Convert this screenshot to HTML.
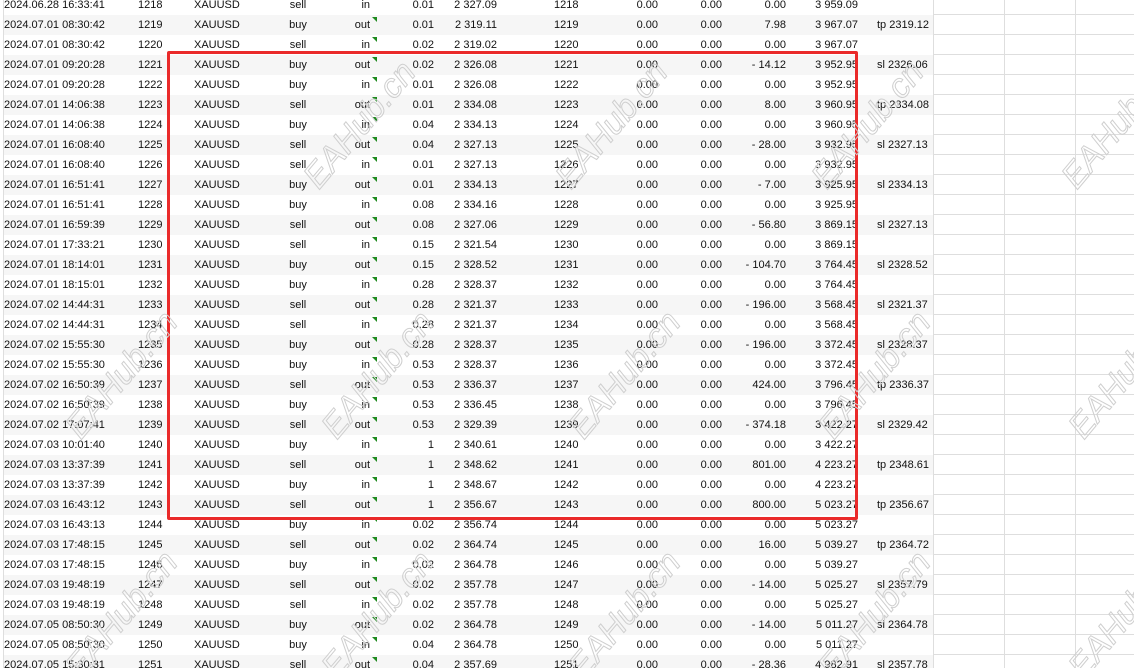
<!DOCTYPE html>
<html><head><meta charset="utf-8"><style>
html,body{margin:0;padding:0;background:#fff;width:1134px;height:668px;overflow:hidden;position:relative;font-family:"Liberation Sans",Tahoma,sans-serif;font-size:11px;color:#111}
.r{position:absolute;left:0;width:1134px;height:20px;line-height:20px}
.r.s::before{content:"";position:absolute;left:4px;width:929px;top:0;height:20px;background:#f6f6f6}
.r::after{content:"";position:absolute;left:933px;right:0;bottom:0;height:1px;background:#dedede}
.r span{position:absolute;top:0;white-space:nowrap}
.a{left:4px}.b{left:138px}.c{left:194px}.d{left:268px;width:60px;text-align:center}
.e{right:764px}.f{right:700px}.g{right:637px}.h{left:554px}.i{right:476px}.j{right:412px}.k{right:348px}.l{right:276px}.m{left:877px}
.t{position:absolute;left:372px;top:2px;width:0;height:0;border-top:5px solid #1f8a1f;border-left:5px solid transparent}
.vl{position:absolute;top:0;bottom:0;width:1px;background:#dedede}
.box{position:absolute;left:167px;top:51px;width:685px;height:463px;border:3px solid #ea2a2a;border-radius:2px}
.wm{position:absolute;font-size:34px;font-style:italic;color:transparent;-webkit-text-stroke:1px #cfcfcf;transform:translate(-50%,-50%) rotate(-50deg);white-space:nowrap;font-family:"Liberation Sans",sans-serif}
</style></head><body>
<div class="vl" style="left:3px"></div>
<div class="vl" style="left:933px"></div>
<div class="vl" style="left:1004px"></div>
<div class="vl" style="left:1075px"></div>

<div class="r" style="top:-5px"><span class="a">2024.06.28 16:33:41</span><span class="b">1218</span><span class="c">XAUUSD</span><span class="d">sell</span><span class="e">in</span><span class="f">0.01</span><span class="g">2 327.09</span><span class="h">1218</span><span class="i">0.00</span><span class="j">0.00</span><span class="k">0.00</span><span class="l">3 959.09</span></div>
<div class="r s" style="top:15px"><span class="a">2024.07.01 08:30:42</span><span class="b">1219</span><span class="c">XAUUSD</span><span class="d">buy</span><span class="e">out</span><i class="t"></i><span class="f">0.01</span><span class="g">2 319.11</span><span class="h">1219</span><span class="i">0.00</span><span class="j">0.00</span><span class="k">7.98</span><span class="l">3 967.07</span><span class="m">tp 2319.12</span></div>
<div class="r" style="top:35px"><span class="a">2024.07.01 08:30:42</span><span class="b">1220</span><span class="c">XAUUSD</span><span class="d">sell</span><span class="e">in</span><i class="t"></i><span class="f">0.02</span><span class="g">2 319.02</span><span class="h">1220</span><span class="i">0.00</span><span class="j">0.00</span><span class="k">0.00</span><span class="l">3 967.07</span></div>
<div class="r s" style="top:55px"><span class="a">2024.07.01 09:20:28</span><span class="b">1221</span><span class="c">XAUUSD</span><span class="d">buy</span><span class="e">out</span><i class="t"></i><span class="f">0.02</span><span class="g">2 326.08</span><span class="h">1221</span><span class="i">0.00</span><span class="j">0.00</span><span class="k">- 14.12</span><span class="l">3 952.95</span><span class="m">sl 2326.06</span></div>
<div class="r" style="top:75px"><span class="a">2024.07.01 09:20:28</span><span class="b">1222</span><span class="c">XAUUSD</span><span class="d">buy</span><span class="e">in</span><i class="t"></i><span class="f">0.01</span><span class="g">2 326.08</span><span class="h">1222</span><span class="i">0.00</span><span class="j">0.00</span><span class="k">0.00</span><span class="l">3 952.95</span></div>
<div class="r s" style="top:95px"><span class="a">2024.07.01 14:06:38</span><span class="b">1223</span><span class="c">XAUUSD</span><span class="d">sell</span><span class="e">out</span><i class="t"></i><span class="f">0.01</span><span class="g">2 334.08</span><span class="h">1223</span><span class="i">0.00</span><span class="j">0.00</span><span class="k">8.00</span><span class="l">3 960.95</span><span class="m">tp 2334.08</span></div>
<div class="r" style="top:115px"><span class="a">2024.07.01 14:06:38</span><span class="b">1224</span><span class="c">XAUUSD</span><span class="d">buy</span><span class="e">in</span><i class="t"></i><span class="f">0.04</span><span class="g">2 334.13</span><span class="h">1224</span><span class="i">0.00</span><span class="j">0.00</span><span class="k">0.00</span><span class="l">3 960.95</span></div>
<div class="r s" style="top:135px"><span class="a">2024.07.01 16:08:40</span><span class="b">1225</span><span class="c">XAUUSD</span><span class="d">sell</span><span class="e">out</span><i class="t"></i><span class="f">0.04</span><span class="g">2 327.13</span><span class="h">1225</span><span class="i">0.00</span><span class="j">0.00</span><span class="k">- 28.00</span><span class="l">3 932.95</span><span class="m">sl 2327.13</span></div>
<div class="r" style="top:155px"><span class="a">2024.07.01 16:08:40</span><span class="b">1226</span><span class="c">XAUUSD</span><span class="d">sell</span><span class="e">in</span><i class="t"></i><span class="f">0.01</span><span class="g">2 327.13</span><span class="h">1226</span><span class="i">0.00</span><span class="j">0.00</span><span class="k">0.00</span><span class="l">3 932.95</span></div>
<div class="r s" style="top:175px"><span class="a">2024.07.01 16:51:41</span><span class="b">1227</span><span class="c">XAUUSD</span><span class="d">buy</span><span class="e">out</span><i class="t"></i><span class="f">0.01</span><span class="g">2 334.13</span><span class="h">1227</span><span class="i">0.00</span><span class="j">0.00</span><span class="k">- 7.00</span><span class="l">3 925.95</span><span class="m">sl 2334.13</span></div>
<div class="r" style="top:195px"><span class="a">2024.07.01 16:51:41</span><span class="b">1228</span><span class="c">XAUUSD</span><span class="d">buy</span><span class="e">in</span><i class="t"></i><span class="f">0.08</span><span class="g">2 334.16</span><span class="h">1228</span><span class="i">0.00</span><span class="j">0.00</span><span class="k">0.00</span><span class="l">3 925.95</span></div>
<div class="r s" style="top:215px"><span class="a">2024.07.01 16:59:39</span><span class="b">1229</span><span class="c">XAUUSD</span><span class="d">sell</span><span class="e">out</span><i class="t"></i><span class="f">0.08</span><span class="g">2 327.06</span><span class="h">1229</span><span class="i">0.00</span><span class="j">0.00</span><span class="k">- 56.80</span><span class="l">3 869.15</span><span class="m">sl 2327.13</span></div>
<div class="r" style="top:235px"><span class="a">2024.07.01 17:33:21</span><span class="b">1230</span><span class="c">XAUUSD</span><span class="d">sell</span><span class="e">in</span><i class="t"></i><span class="f">0.15</span><span class="g">2 321.54</span><span class="h">1230</span><span class="i">0.00</span><span class="j">0.00</span><span class="k">0.00</span><span class="l">3 869.15</span></div>
<div class="r s" style="top:255px"><span class="a">2024.07.01 18:14:01</span><span class="b">1231</span><span class="c">XAUUSD</span><span class="d">buy</span><span class="e">out</span><i class="t"></i><span class="f">0.15</span><span class="g">2 328.52</span><span class="h">1231</span><span class="i">0.00</span><span class="j">0.00</span><span class="k">- 104.70</span><span class="l">3 764.45</span><span class="m">sl 2328.52</span></div>
<div class="r" style="top:275px"><span class="a">2024.07.01 18:15:01</span><span class="b">1232</span><span class="c">XAUUSD</span><span class="d">buy</span><span class="e">in</span><i class="t"></i><span class="f">0.28</span><span class="g">2 328.37</span><span class="h">1232</span><span class="i">0.00</span><span class="j">0.00</span><span class="k">0.00</span><span class="l">3 764.45</span></div>
<div class="r s" style="top:295px"><span class="a">2024.07.02 14:44:31</span><span class="b">1233</span><span class="c">XAUUSD</span><span class="d">sell</span><span class="e">out</span><i class="t"></i><span class="f">0.28</span><span class="g">2 321.37</span><span class="h">1233</span><span class="i">0.00</span><span class="j">0.00</span><span class="k">- 196.00</span><span class="l">3 568.45</span><span class="m">sl 2321.37</span></div>
<div class="r" style="top:315px"><span class="a">2024.07.02 14:44:31</span><span class="b">1234</span><span class="c">XAUUSD</span><span class="d">sell</span><span class="e">in</span><i class="t"></i><span class="f">0.28</span><span class="g">2 321.37</span><span class="h">1234</span><span class="i">0.00</span><span class="j">0.00</span><span class="k">0.00</span><span class="l">3 568.45</span></div>
<div class="r s" style="top:335px"><span class="a">2024.07.02 15:55:30</span><span class="b">1235</span><span class="c">XAUUSD</span><span class="d">buy</span><span class="e">out</span><i class="t"></i><span class="f">0.28</span><span class="g">2 328.37</span><span class="h">1235</span><span class="i">0.00</span><span class="j">0.00</span><span class="k">- 196.00</span><span class="l">3 372.45</span><span class="m">sl 2328.37</span></div>
<div class="r" style="top:355px"><span class="a">2024.07.02 15:55:30</span><span class="b">1236</span><span class="c">XAUUSD</span><span class="d">buy</span><span class="e">in</span><i class="t"></i><span class="f">0.53</span><span class="g">2 328.37</span><span class="h">1236</span><span class="i">0.00</span><span class="j">0.00</span><span class="k">0.00</span><span class="l">3 372.45</span></div>
<div class="r s" style="top:375px"><span class="a">2024.07.02 16:50:39</span><span class="b">1237</span><span class="c">XAUUSD</span><span class="d">sell</span><span class="e">out</span><i class="t"></i><span class="f">0.53</span><span class="g">2 336.37</span><span class="h">1237</span><span class="i">0.00</span><span class="j">0.00</span><span class="k">424.00</span><span class="l">3 796.45</span><span class="m">tp 2336.37</span></div>
<div class="r" style="top:395px"><span class="a">2024.07.02 16:50:39</span><span class="b">1238</span><span class="c">XAUUSD</span><span class="d">buy</span><span class="e">in</span><i class="t"></i><span class="f">0.53</span><span class="g">2 336.45</span><span class="h">1238</span><span class="i">0.00</span><span class="j">0.00</span><span class="k">0.00</span><span class="l">3 796.45</span></div>
<div class="r s" style="top:415px"><span class="a">2024.07.02 17:07:41</span><span class="b">1239</span><span class="c">XAUUSD</span><span class="d">sell</span><span class="e">out</span><i class="t"></i><span class="f">0.53</span><span class="g">2 329.39</span><span class="h">1239</span><span class="i">0.00</span><span class="j">0.00</span><span class="k">- 374.18</span><span class="l">3 422.27</span><span class="m">sl 2329.42</span></div>
<div class="r" style="top:435px"><span class="a">2024.07.03 10:01:40</span><span class="b">1240</span><span class="c">XAUUSD</span><span class="d">buy</span><span class="e">in</span><i class="t"></i><span class="f">1</span><span class="g">2 340.61</span><span class="h">1240</span><span class="i">0.00</span><span class="j">0.00</span><span class="k">0.00</span><span class="l">3 422.27</span></div>
<div class="r s" style="top:455px"><span class="a">2024.07.03 13:37:39</span><span class="b">1241</span><span class="c">XAUUSD</span><span class="d">sell</span><span class="e">out</span><i class="t"></i><span class="f">1</span><span class="g">2 348.62</span><span class="h">1241</span><span class="i">0.00</span><span class="j">0.00</span><span class="k">801.00</span><span class="l">4 223.27</span><span class="m">tp 2348.61</span></div>
<div class="r" style="top:475px"><span class="a">2024.07.03 13:37:39</span><span class="b">1242</span><span class="c">XAUUSD</span><span class="d">buy</span><span class="e">in</span><i class="t"></i><span class="f">1</span><span class="g">2 348.67</span><span class="h">1242</span><span class="i">0.00</span><span class="j">0.00</span><span class="k">0.00</span><span class="l">4 223.27</span></div>
<div class="r s" style="top:495px"><span class="a">2024.07.03 16:43:12</span><span class="b">1243</span><span class="c">XAUUSD</span><span class="d">sell</span><span class="e">out</span><i class="t"></i><span class="f">1</span><span class="g">2 356.67</span><span class="h">1243</span><span class="i">0.00</span><span class="j">0.00</span><span class="k">800.00</span><span class="l">5 023.27</span><span class="m">tp 2356.67</span></div>
<div class="r" style="top:515px"><span class="a">2024.07.03 16:43:13</span><span class="b">1244</span><span class="c">XAUUSD</span><span class="d">buy</span><span class="e">in</span><i class="t"></i><span class="f">0.02</span><span class="g">2 356.74</span><span class="h">1244</span><span class="i">0.00</span><span class="j">0.00</span><span class="k">0.00</span><span class="l">5 023.27</span></div>
<div class="r s" style="top:535px"><span class="a">2024.07.03 17:48:15</span><span class="b">1245</span><span class="c">XAUUSD</span><span class="d">sell</span><span class="e">out</span><i class="t"></i><span class="f">0.02</span><span class="g">2 364.74</span><span class="h">1245</span><span class="i">0.00</span><span class="j">0.00</span><span class="k">16.00</span><span class="l">5 039.27</span><span class="m">tp 2364.72</span></div>
<div class="r" style="top:555px"><span class="a">2024.07.03 17:48:15</span><span class="b">1246</span><span class="c">XAUUSD</span><span class="d">buy</span><span class="e">in</span><i class="t"></i><span class="f">0.02</span><span class="g">2 364.78</span><span class="h">1246</span><span class="i">0.00</span><span class="j">0.00</span><span class="k">0.00</span><span class="l">5 039.27</span></div>
<div class="r s" style="top:575px"><span class="a">2024.07.03 19:48:19</span><span class="b">1247</span><span class="c">XAUUSD</span><span class="d">sell</span><span class="e">out</span><i class="t"></i><span class="f">0.02</span><span class="g">2 357.78</span><span class="h">1247</span><span class="i">0.00</span><span class="j">0.00</span><span class="k">- 14.00</span><span class="l">5 025.27</span><span class="m">sl 2357.79</span></div>
<div class="r" style="top:595px"><span class="a">2024.07.03 19:48:19</span><span class="b">1248</span><span class="c">XAUUSD</span><span class="d">sell</span><span class="e">in</span><i class="t"></i><span class="f">0.02</span><span class="g">2 357.78</span><span class="h">1248</span><span class="i">0.00</span><span class="j">0.00</span><span class="k">0.00</span><span class="l">5 025.27</span></div>
<div class="r s" style="top:615px"><span class="a">2024.07.05 08:50:30</span><span class="b">1249</span><span class="c">XAUUSD</span><span class="d">buy</span><span class="e">out</span><i class="t"></i><span class="f">0.02</span><span class="g">2 364.78</span><span class="h">1249</span><span class="i">0.00</span><span class="j">0.00</span><span class="k">- 14.00</span><span class="l">5 011.27</span><span class="m">sl 2364.78</span></div>
<div class="r" style="top:635px"><span class="a">2024.07.05 08:50:30</span><span class="b">1250</span><span class="c">XAUUSD</span><span class="d">buy</span><span class="e">in</span><i class="t"></i><span class="f">0.04</span><span class="g">2 364.78</span><span class="h">1250</span><span class="i">0.00</span><span class="j">0.00</span><span class="k">0.00</span><span class="l">5 011.27</span></div>
<div class="r s" style="top:655px"><span class="a">2024.07.05 15:30:31</span><span class="b">1251</span><span class="c">XAUUSD</span><span class="d">sell</span><span class="e">out</span><i class="t"></i><span class="f">0.04</span><span class="g">2 357.69</span><span class="h">1251</span><span class="i">0.00</span><span class="j">0.00</span><span class="k">- 28.36</span><span class="l">4 982.91</span><span class="m">sl 2357.78</span></div>

<div class="box"></div>

<div class="wm" style="left:360px;top:125px">EAHub.cn</div>
<div class="wm" style="left:612px;top:125px">EAHub.cn</div>
<div class="wm" style="left:868px;top:125px">EAHub.cn</div>
<div class="wm" style="left:1118px;top:125px">EAHub.cn</div>
<div class="wm" style="left:122px;top:375px">EAHub.cn</div>
<div class="wm" style="left:378px;top:375px">EAHub.cn</div>
<div class="wm" style="left:625px;top:375px">EAHub.cn</div>
<div class="wm" style="left:875px;top:375px">EAHub.cn</div>
<div class="wm" style="left:1125px;top:375px">EAHub.cn</div>
<div class="wm" style="left:122px;top:615px">EAHub.cn</div>
<div class="wm" style="left:378px;top:615px">EAHub.cn</div>
<div class="wm" style="left:625px;top:615px">EAHub.cn</div>
<div class="wm" style="left:875px;top:615px">EAHub.cn</div>
<div class="wm" style="left:1125px;top:615px">EAHub.cn</div>
</body></html>
